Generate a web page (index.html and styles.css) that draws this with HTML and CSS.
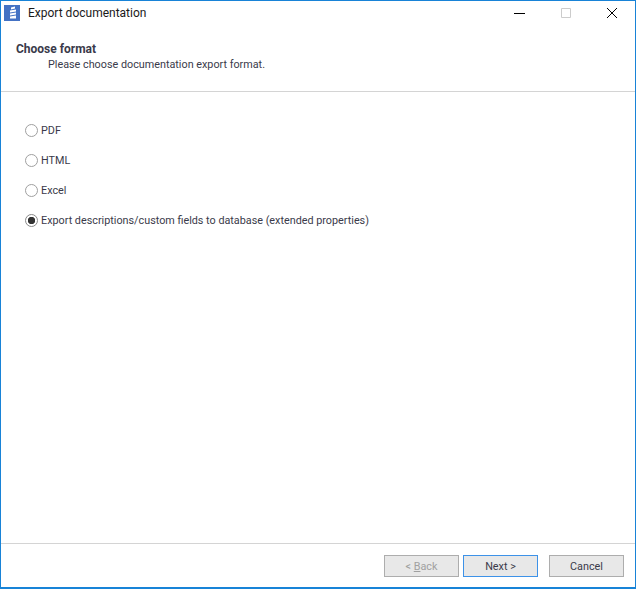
FILE: index.html
```html
<!DOCTYPE html>
<html lang="en">
<head>
  <meta charset="UTF-8">
  <title>Export documentation</title>
  <link rel="stylesheet" href="styles.css">
</head>
<body>
  <div class="window">
    <div class="titlebar">
      <svg class="app-icon" width="16" height="16" viewBox="0 0 16 16">
        <rect width="16" height="16" fill="#4472c4"/>
        <path d="M7 2.5l4-1v2l-4 1zM6 5.5l6-1v2l-6 1zM6 8.5l6-1v2l-6 1zM6 11.5l6-1v3H6z" fill="#fff"/>
      </svg>
      <span class="title">Export documentation</span>
      <div class="controls">
        <svg class="ctl" width="46" height="12" viewBox="0 0 46 12"><path d="M17 6.5h11" stroke="#000" fill="none"/></svg>
        <svg class="ctl" width="46" height="12" viewBox="0 0 46 12"><path d="M18.5 1.5h9v9h-9z" stroke="#ccc" fill="none"/></svg>
        <svg class="ctl" width="46" height="12" viewBox="0 0 46 12"><path d="M18 1l10 10M28 1L18 11" stroke="#000" fill="none"/></svg>
      </div>
    </div>

    <div class="header">
      <div class="header-title">Choose format</div>
      <div class="header-sub">Please choose documentation export format.</div>
    </div>

    <div class="content">
      <div class="option"><span class="radio"></span><span>PDF</span></div>
      <div class="option"><span class="radio"></span><span>HTML</span></div>
      <div class="option"><span class="radio"></span><span>Excel</span></div>
      <div class="option"><span class="radio checked"></span><span>Export descriptions/custom fields to database (extended properties)</span></div>
    </div>

    <div class="footer">
      <button class="btn" disabled>&lt; <u>B</u>ack</button>
      <button class="btn default">Next &gt;</button>
      <button class="btn cancel">Cancel</button>
    </div>
  </div>
</body>
</html>
```

FILE: styles.css
```css
html, body {
  margin: 0;
  padding: 0;
  height: 100%;
}

body {
  background: #fff;
  color: #3a3a4a;
  font-family: Roboto, sans-serif;
  font-size: 10.8px;
}

.window {
  box-sizing: border-box;
  height: 589px;
  display: flex;
  flex-direction: column;
  border: 1px solid #1883d7;
  border-bottom-width: 2px;
  background: #fff;
}

.titlebar {
  display: flex;
  align-items: center;
  height: 24px;
  padding-left: 3px;
}

.app-icon {
  margin-right: 8px;
}

.title {
  color: #1a1a1a;
  font-size: 12px;
}

.controls {
  display: flex;
  margin-left: auto;
}

.ctl {
  display: block;
}

.header {
  height: 67px;
  box-sizing: border-box;
  padding: 17px 0 0 15px;
  border-bottom: 1px solid #d4d4d4;
}

.header-title {
  font-size: 12px;
  font-weight: bold;
  line-height: 15px;
}

.header-sub {
  margin-left: 32px;
  line-height: 16px;
}

.content {
  flex: 1;
  padding: 23px 0 0 24px;
}

.option {
  display: flex;
  align-items: center;
  height: 30px;
}

.radio {
  box-sizing: border-box;
  width: 13px;
  height: 13px;
  margin-right: 3px;
  border: 1px solid #a0a0a0;
  border-radius: 50%;
  background: #fff;
}

.radio.checked {
  border-color: #8a8a8a;
  background: radial-gradient(circle, #333 0 3.4px, #fff 4px);
}

.footer {
  display: flex;
  justify-content: flex-end;
  gap: 4px;
  height: 44px;
  box-sizing: border-box;
  padding: 11px 11px 0 0;
  border-top: 1px solid #d4d4d4;
}

.btn {
  box-sizing: border-box;
  width: 75px;
  height: 22px;
  padding: 0;
  border: 1px solid #adadad;
  background: #e8e8e8;
  color: #3a3a4a;
  font-family: inherit;
  font-size: 10.8px;
}

.btn:disabled {
  color: #a0a0a0;
}

.btn.default {
  border-color: #3d92e8;
}

.btn.cancel {
  margin-left: 7px;
}
```
